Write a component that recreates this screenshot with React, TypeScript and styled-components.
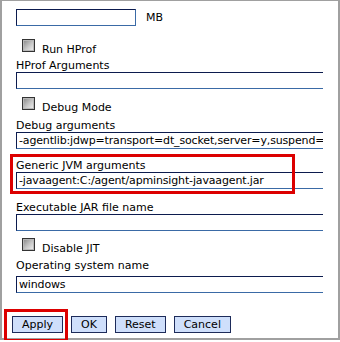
import React from "react";
import styled, { createGlobalStyle } from "styled-components";

const GlobalStyle = createGlobalStyle`
  html, body {
    margin: 0;
    padding: 0;
    background: #fff;
  }
  body {
    font-family: "DejaVu Sans", Verdana, sans-serif;
    font-size: 11px;
    color: #000;
  }
`;

const Frame = styled.div`
  position: relative;
  box-sizing: border-box;
  width: 340px;
  height: 340px;
  border: 2px solid #a0a0a0;
  border-top-width: 1px;
  padding: 8px 0 0 14px;
`;

const SizeRow = styled.div`
  display: flex;
  align-items: center;
  gap: 10px;
`;

const Unit = styled.span`
  line-height: 13px;
`;

const Field = styled.div<{ $mt: number }>`
  position: relative;
  margin-top: ${(p) => p.$mt}px;
`;

const Label = styled.label`
  display: block;
  height: 13px;
  line-height: 13px;
  white-space: nowrap;
`;

const TextInput = styled.input<{ $full?: boolean; $gap?: number }>`
  display: block;
  box-sizing: border-box;
  width: ${(p) => (p.$full ? "307px" : "120px")};
  height: 17px;
  margin: ${(p) => p.$gap || 0}px 0 0 0;
  padding: 0 0 0 2px;
  border-top: 1px solid #0c1b4e;
  border-left: 1px solid #0c1b4e;
  border-bottom: 1px solid #3a6aa6;
  border-right: ${(p) => (p.$full ? "none" : "1px solid #3a6aa6")};
  border-radius: 0;
  background: #fff;
  font-family: "DejaVu Sans", Verdana, sans-serif;
  font-size: 11px;
  letter-spacing: -0.15px;
  color: #000;
  outline: none;
`;

const CheckRow = styled.div<{ $mt: number }>`
  display: flex;
  align-items: flex-start;
  gap: 7px;
  height: 17px;
  padding-left: 6px;
  margin-top: ${(p) => p.$mt}px;
`;

const Box = styled.span`
  box-sizing: border-box;
  width: 13px;
  height: 13px;
  border: 1px solid #333;
  box-shadow: inset 0 0 0 1px #b8b8b8;
  background: linear-gradient(135deg, #858585 0%, #c8c8c8 55%, #f2f2f2 100%);
`;

const CheckText = styled.span`
  margin-top: 4px;
  line-height: 13px;
  white-space: nowrap;
`;

const ButtonRow = styled.div`
  display: flex;
  gap: 8px;
  margin: 23px 0 0 -4px;
`;

const ButtonSlot = styled.div`
  position: relative;
`;

const Button = styled.button`
  box-sizing: border-box;
  height: 17px;
  padding: 0 9px;
  border: 1px solid #1d2b5a;
  border-radius: 0;
  background: #cfdffb;
  font-family: "DejaVu Sans", Verdana, sans-serif;
  font-size: 11px;
  line-height: 15px;
  color: #000;
  cursor: pointer;
`;

const Highlight = styled.div<{ $top: number; $left: number; $w: number; $h: number }>`
  position: absolute;
  box-sizing: border-box;
  top: ${(p) => p.$top}px;
  left: ${(p) => p.$left}px;
  width: ${(p) => p.$w}px;
  height: ${(p) => p.$h}px;
  border: 3px solid #dc0000;
  pointer-events: none;
`;

const Check: React.FC<{ mt: number; label: string }> = ({ mt, label }) => (
  <CheckRow $mt={mt}>
    <Box />
    <CheckText>{label}</CheckText>
  </CheckRow>
);

export default function App() {
  return (
    <>
      <GlobalStyle />
      <Frame>
        <SizeRow>
          <TextInput defaultValue="" />
          <Unit>MB</Unit>
        </SizeRow>

        <Check mt={13} label="Run HProf" />

        <Field $mt={3}>
          <Label>HProf Arguments</Label>
          <TextInput $full defaultValue="" />
        </Field>

        <Check mt={8} label="Debug Mode" />

        <Field $mt={5}>
          <Label>Debug arguments</Label>
          <TextInput
            $full
            defaultValue="-agentlib:jdwp=transport=dt_socket,server=y,suspend=n,address=7777"
          />
        </Field>

        <Field $mt={10}>
          <Label>Generic JVM arguments</Label>
          <TextInput $full defaultValue="-javaagent:C:/agent/apminsight-javaagent.jar" />
          <Highlight $top={-5} $left={-6} $w={285} $h={40} />
        </Field>

        <Field $mt={12}>
          <Label>Executable JAR file name</Label>
          <TextInput $full defaultValue="" />
        </Field>

        <Check mt={7} label="Disable JIT" />

        <Field $mt={4}>
          <Label>Operating system name</Label>
          <TextInput $full $gap={4} defaultValue="windows" />
        </Field>

        <ButtonRow>
          <ButtonSlot>
            <Button>Apply</Button>
            <Highlight $top={-7} $left={-8} $w={64} $h={33} />
          </ButtonSlot>
          <Button>OK</Button>
          <Button>Reset</Button>
          <Button>Cancel</Button>
        </ButtonRow>
      </Frame>
    </>
  );
}
